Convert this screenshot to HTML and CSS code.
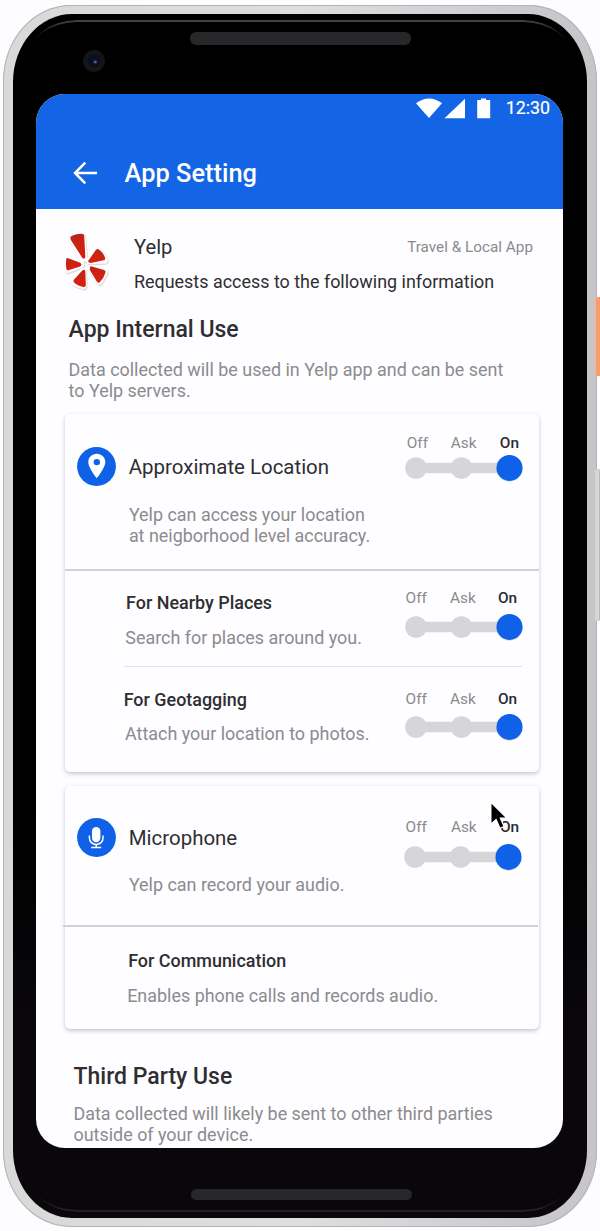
FILE: index.html
```
<!DOCTYPE html>
<html lang="en">
<head>
<meta charset="utf-8">
<title>App Setting</title>
<link rel="stylesheet" href="styles.css">
</head>
<body>
<svg class="defs" width="0" height="0" aria-hidden="true">
  <symbol id="slider" viewBox="0 0 120 28">
    <path d="M11 14H104" stroke="#d6d5d8" stroke-width="10.4"/>
    <circle cx="11" cy="14" r="10.8" fill="#d6d5d8"/>
    <circle cx="56.5" cy="14" r="10.8" fill="#d6d5d8"/>
    <circle cx="104.5" cy="14.6" r="13" fill="#8fa2c4" opacity=".55"/>
    <circle cx="104.5" cy="13.9" r="13" fill="#0f62e8"/>
  </symbol>
</svg>
<div class="device">
  <span class="side-button power"></span>
  <span class="side-button volume"></span>
  <div class="bezel">
    <span class="glint"></span>
    <div class="bezel-top">
      <svg class="camera" viewBox="0 0 22 22">
        <circle cx="11" cy="11" r="11" fill="#151416"/>
        <circle cx="11" cy="10.5" r="6.2" fill="#0b0d20"/>
        <circle cx="12.2" cy="11.8" r="2.4" fill="#1d2547"/>
        <circle cx="12.4" cy="12" r="1.1" fill="#66759c"/>
      </svg>
      <span class="speaker"></span>
    </div>
    <main class="screen">
      <header class="app-header">
        <div class="status-bar">
          <svg class="status-icons" viewBox="0 0 76 22">
            <path d="M0 5.200Q13 -4.200 26 5.200L13 20Z" fill="#fff"/>
            <path d="M28.500 20.300H49V.8Z" fill="#fff"/>
            <path d="M61.200 2H65V.6h5V2h4.200v18.300H61.200Z" fill="#fff"/>
          </svg>
          <span class="clock">12:30</span>
        </div>
        <div class="toolbar">
          <svg class="back" viewBox="0 0 24 24" fill="none" stroke="#fff" stroke-width="2.500"><path d="M24 12H2M12.300 1.600L2 12L12.300 22.400"/></svg>
          <h1>App Setting</h1>
        </div>
      </header>

      <section class="app-info">
        <svg class="logo" viewBox="0 0 50 60">
          <defs><linearGradient id="red" x1="0" y1="0" x2="0" y2="1"><stop offset="0" stop-color="#bd2418"/><stop offset="1" stop-color="#dc200d"/></linearGradient></defs>
          <g stroke-linejoin="round">
            <g fill="#d3d1d4" stroke="#d3d1d4" stroke-width="8" transform="translate(.7 1.100)" opacity=".7">
              <path d="M9.500 7L19 4L21 27L20 27.500Z"/><path d="M27 29.500L35.500 20L42 29Z"/><path d="M5 28.500L18 33.500L5 38.500Z"/><path d="M20 41L20.500 55L12 52Z"/><path d="M28.500 37.500L42 41L37 50.500Z"/>
            </g>
            <g fill="#fff" stroke="#fff" stroke-width="7.200">
              <path d="M9.500 7L19 4L21 27L20 27.500Z"/><path d="M27 29.500L35.500 20L42 29Z"/><path d="M5 28.500L18 33.500L5 38.500Z"/><path d="M20 41L20.500 55L12 52Z"/><path d="M28.500 37.500L42 41L37 50.500Z"/>
            </g>
          </g>
          <g fill="url(#red)">
            <path d="M7.500 6.500Q7 5 10 3.900Q14 2 19 2.200Q21.500 2.200 21.600 4L22.800 25.500Q22.500 29 19.800 27L8 8.500Z"/>
            <path d="M26 29.500L33.500 18.800Q35 17 37 18.500Q41.500 22 43 27Q43.500 28.800 41.500 29.300L28.500 32Q25 32 26 29.500Z"/>
            <path d="M4.500 26.900L17 31.500Q20.500 33.800 17.500 35.500L5.500 39.500Q3.500 40 3.300 37.500Q2.600 32.500 3.300 28.300Q3.500 26.600 4.500 26.900Z"/>
            <path d="M22.800 41.500L23.300 54.500Q23.300 57 20.800 56.500Q14.500 55.500 11.300 52Q10 50.500 11.200 49L19.500 40Q22.800 37.500 22.800 41.500Z"/>
            <path d="M29.500 35.500L42 39.200Q44 40 43.300 42Q41.500 48 37.500 51.700Q36 53 34.500 51L27.500 39.500Q26.500 35 29.500 35.500Z"/>
          </g>
        </svg>
        <div class="app-text">
          <div class="app-line"><h2>Yelp</h2><span class="category">Travel &amp; Local App</span></div>
          <p class="request">Requests access to the following information</p>
        </div>
      </section>

      <section class="use internal">
        <h3>App Internal Use</h3>
        <p>Data collected will be used in Yelp app and can be sent<br>to Yelp servers.</p>
      </section>

      <article class="card location">
        <div class="row lead">
          <div class="info">
            <div class="heading">
              <svg class="badge" viewBox="0 0 39 39"><circle cx="19.500" cy="19.500" r="19.400" fill="#0f62e8"/><path fill="#fff" fill-rule="evenodd" d="M19.800 6.800C14.900 6.800 11.300 10.400 11.300 15.100C11.300 21 19.800 31.300 19.800 31.300S28.300 21 28.300 15.100C28.300 10.400 24.700 6.800 19.800 6.800ZM19.800 11.900a3.200 3.200 0 1 1 0 6.400a3.200 3.200 0 0 1 0-6.400Z"/></svg>
              <h4>Approximate Location</h4>
            </div>
            <p>Yelp can access your location<br>at neigborhood level accuracy.</p>
          </div>
          <div class="switch"><div class="labels wide"><span>Off</span><span>Ask</span><b>On</b></div><svg class="slider"><use href="#slider"/></svg></div>
        </div>
        <div class="row nearby">
          <div class="info"><h5>For Nearby Places</h5><p>Search for places around you.</p></div>
          <div class="switch"><div class="labels"><span>Off</span><span>Ask</span><b>On</b></div><svg class="slider"><use href="#slider"/></svg></div>
        </div>
        <div class="row geotag">
          <div class="info"><h5>For Geotagging</h5><p>Attach your location to photos.</p></div>
          <div class="switch"><div class="labels"><span>Off</span><span>Ask</span><b>On</b></div><svg class="slider"><use href="#slider"/></svg></div>
        </div>
      </article>

      <article class="card microphone">
        <div class="row lead">
          <div class="info">
            <div class="heading">
              <svg class="badge" viewBox="0 0 39 39"><circle cx="19.500" cy="19.500" r="19.400" fill="#0f62e8"/><rect x="15" y="9" width="8.400" height="15.200" rx="4.200" fill="#fff"/><path d="M12.400 17.500v2.500a6.800 6.500 0 0 0 13.600 0v-2.500M19.200 26.500v3M14.200 29.600h10" fill="none" stroke="#fff" stroke-width="1.500"/></svg>
              <h4>Microphone</h4>
            </div>
            <p>Yelp can record your audio.</p>
          </div>
          <div class="switch"><div class="labels"><span>Off</span><span>Ask</span><b>On</b></div><svg class="slider"><use href="#slider"/></svg></div>
        </div>
        <div class="row communication">
          <div class="info"><h5>For Communication</h5><p>Enables phone calls and records audio.</p></div>
        </div>
      </article>

      <section class="use third-party">
        <h3>Third Party Use</h3>
        <p>Data collected will likely be sent to other third parties<br>outside of your device.</p>
      </section>
    </main>
    <span class="speaker bottom"></span>
  </div>
</div>
<svg class="cursor" viewBox="0 0 22 32"><path d="M2.500 1V25L7.800 20.600L11.400 29.200L17 26.800L13.400 18.800H20.600Z" fill="#fff"/><path d="M3.500 3.800V22.700L8.300 18.400L12.300 27.600L15.300 26.300L11.400 17.400H17.400Z" fill="#000"/></svg>
</body>
</html>
```
FILE: styles.css
```
* { box-sizing: border-box; }
h1, h2, h3, h4, h5, p { margin: 0; font-weight: 400; }

body {
  margin: 0;
  height: 1231px;
  padding: 5px 3.500px 4px 3px;
  position: relative;
  overflow: hidden;
  background: #fdfcfe;
  color: #2f2e31;
  font-family: Roboto, "Liberation Sans", sans-serif;
  font-size: 17.930px;
}

.defs { position: absolute; }

/* Phone frame */
.device {
  position: relative;
  height: 1222px;
  padding: 8.500px 9.500px 9.500px 10px;
  border-radius: 68px / 76px;
  background: linear-gradient(90deg, #d9d9da 0, #dededf 50%, #c6c4c7 100%);
  box-shadow: inset 0 0 0 1px #b3b2b4;
}

.side-button { position: absolute; width: 6px; }
.power { left: 591.500px; top: 292px; height: 79px; border-radius: 3px 0 0 3px; background: #f69c6d; box-shadow: inset 1px 0 #f9b594; }
.volume { left: 591.500px; top: 464px; width: 5px; height: 152px; border-radius: 2px; background: #d6d6d7; box-shadow: inset -1px 0 #b9b9ba; }

.bezel {
  position: relative;
  height: 1204px;
  padding: 0 24px 0 23px;
  border-radius: 59px / 68px;
  background: linear-gradient(#000 0, #000 65%, #09070a 85%);
}

.glint {
  position: absolute;
  inset: 6px 14px;
  border: 0 solid;
  border-width: 2px 0;
  border-color: #464548 transparent #242326;
  border-radius: 50px / 40px;
  -webkit-mask-image: linear-gradient(#000 0, transparent 20px calc(100% - 20px), #000 100%);
  mask-image: linear-gradient(#000 0, transparent 20px calc(100% - 20px), #000 100%);
}

.bezel-top { position: relative; display: flex; height: 80.500px; }
.camera { width: 22px; height: 22px; margin: 36px 0 0 46.500px; }
.speaker { width: 221px; height: 13px; margin: 18.500px 0 0 85.500px; border-radius: 6px; background: #272628; }
.speaker.bottom { display: block; position: relative; height: 11.500px; margin: 41px 0 0 154.500px; }

/* Screen */
.screen {
  position: relative;
  height: 1053.500px;
  overflow: hidden;
  border-radius: 29px;
  background: #fefdff;
}

.app-header { height: 115.300px; background: #1465e6; color: #fff; }
.status-bar { display: flex; align-items: flex-start; padding: 4.200px 0 0 380px; height: 57px; }
.status-icons { width: 76px; height: 22px; }
.clock { margin-left: 13.800px; line-height: 20px; font-size: 17.800px; font-weight: 400; -webkit-text-stroke: .2px #fff; }
.toolbar { display: flex; align-items: center; height: 43px; padding-left: 37.200px; }
.back { width: 24px; height: 24px; }
.toolbar h1 { margin: 1px 0 0 27.400px; font-size: 25.400px; font-weight: 500; line-height: 43px; }

.app-info { display: flex; height: 108px; padding-left: 26.500px; }
.logo { width: 49px; height: 60px; margin-top: 21.700px; }
.app-text { width: 399px; margin: 28px 0 0 22.500px; }
.app-line { display: flex; justify-content: space-between; line-height: 20px; }
.app-line h2 { font-size: 20.200px; }
.category { color: #8b8a8d; font-size: 15.300px; }
.request { margin-top: 14.800px; line-height: 20px; }

.use h3 { font-size: 23px; font-weight: 500; line-height: 26px; }
.use p { color: #8c8b8e; line-height: 20.200px; }
.internal { height: 96.700px; padding-left: 32.600px; }
.internal p { margin-top: 17.200px; }
.third-party { padding: 34.800px 0 0 37.500px; }
.third-party p { margin-top: 14.200px; line-height: 20.500px; }

/* Permission cards */
.card {
  width: 474px;
  margin-left: 28.700px;
  border-radius: 5px;
  background: #fefdff;
  box-shadow: 0 2px 4px rgba(50, 48, 56, .25), 0 0 2px rgba(50, 48, 56, .04);
}
.card p { color: #8c8b8e; }
.row { display: grid; grid-template-columns: 340.300px 1fr; }
.row h5 { font-size: 17.930px; font-weight: 500; line-height: 20px; }
.row p { line-height: 20px; }
.heading { display: flex; align-items: center; gap: 12.800px; height: 40px; padding-left: 12.300px; }
.heading h4 { padding-top: 1px; font-size: 20.450px; }
.badge { width: 39px; height: 39px; }
.row.lead p { margin: 18.600px 0 0 64.200px; line-height: 20.400px; }
.lead { border-bottom: 2px solid #d2d1d4; }

.location .lead { height: 157px; padding-top: 19.600px; }
.location .lead .info { padding-top: 13.200px; }
.microphone .lead { width: 475px; height: 141.500px; margin-left: -2px; padding: 31.600px 0 0 2px; }
.microphone .lead p { margin-top: 17px; }

.nearby { height: 96px; margin: 0 17px 0 59.300px; padding-top: 18px; grid-template-columns: 281px 120px; border-bottom: 1px solid #e3e2e5; }
.nearby .info { padding: 3.900px 0 0 2.100px; }
.nearby p { margin: 14.700px 0 0 -.8px; }
.geotag { height: 105px; padding-top: 22.800px; }
.geotag .info { padding: .6px 0 0 59px; }
.geotag p { margin: 13.500px 0 0 1.300px; }
.communication { height: 102px; padding: 23.600px 0 0 63.500px; }
.communication p { margin: 14.800px 0 0 -1px; }

.labels { display: grid; grid-template-columns: 44.500px 47.800px auto; padding-left: .6px; line-height: 18px; color: #8b8a8d; font-size: 15.400px; }
.labels b { color: #2c2b2e; font-weight: 500; }
.labels.wide { grid-template-columns: 44px 49px auto; padding-left: 1.800px; }
.slider { display: block; width: 120px; height: 28px; margin-top: 2.800px; }
.nearby .slider { margin-top: 6px; }
.geotag .slider { margin-top: 5.200px; }
.microphone .labels { grid-template-columns: 45.300px 49px auto; padding-top: .8px; }
.microphone .slider { margin: 6.400px 0 0 -1.300px; }

.card.microphone { margin-top: 14px; }

.cursor { position: absolute; left: 488px; top: 799.500px; width: 22px; height: 32px; }
```
